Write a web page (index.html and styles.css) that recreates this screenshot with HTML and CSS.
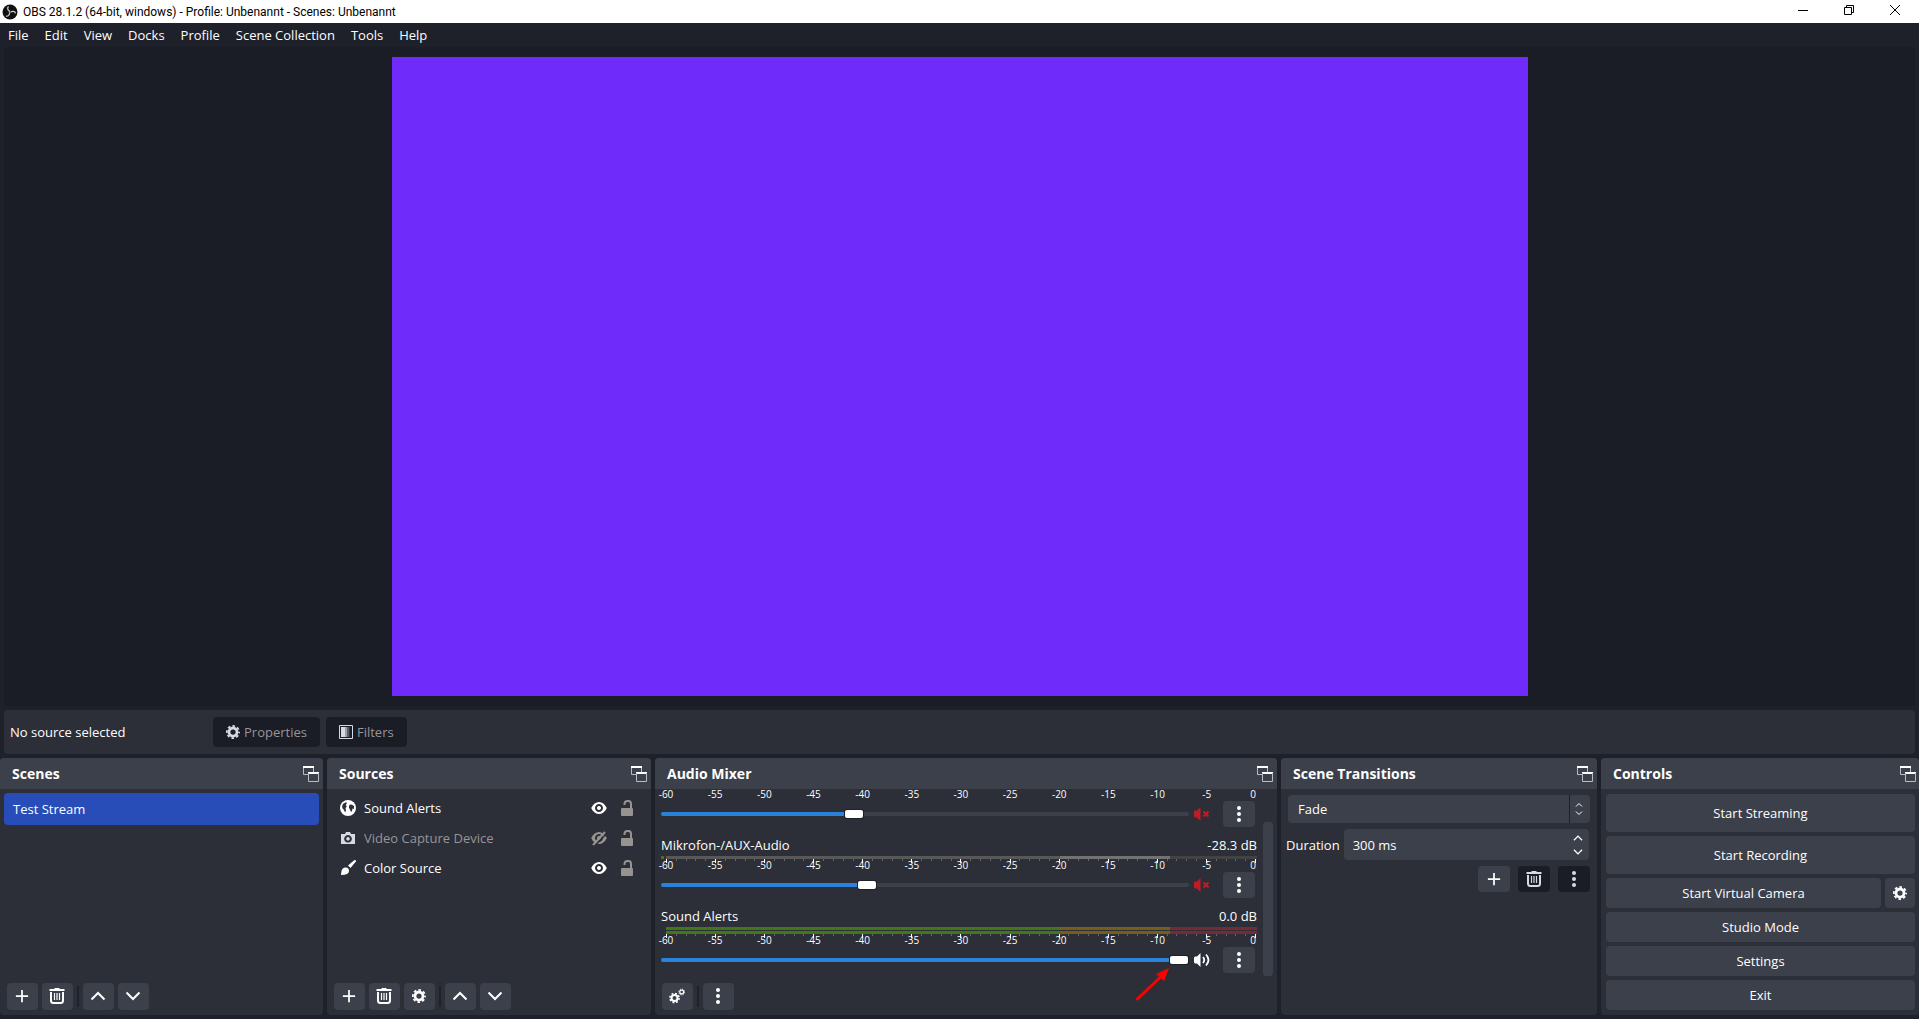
FILE: index.html
```html
<!DOCTYPE html>
<html lang="en">
<head>
<meta charset="utf-8">
<title>OBS 28.1.2 (64-bit, windows) - Profile: Unbenannt - Scenes: Unbenannt</title>
<link rel="stylesheet" href="styles.css">
</head>
<body>
<svg class="sprite" aria-hidden="true">
  <symbol id="popout" viewBox="0 0 16 16">
    <path d="M5.500 8.500h-5v-8h10v6" fill="none" stroke="#b9bcc2"/>
    <path d="M0 0h11v2H0zM5 6h11v2H5z" fill="#fff"/>
    <path d="M5.500 7v8.500h10V7" fill="none" stroke="#b9bcc2"/>
  </symbol>
  <symbol id="plus" viewBox="0 0 16 16"><path d="M8 1v14M1 8h14" stroke="currentColor" stroke-width="2"/></symbol>
  <symbol id="trash" viewBox="0 0 16 16">
    <path d="M.5 2h15M5.500 1h5" stroke="currentColor" stroke-width="1.800"/>
    <path d="M2 4v8.500q0 2.500 2.500 2.500h7q2.500 0 2.500-2.500V4" fill="none" stroke="currentColor" stroke-width="2"/>
    <path d="M5.500 5v7M8 5v7M10.500 5v7" stroke="currentColor" stroke-width="1.200"/>
  </symbol>
  <symbol id="gear" viewBox="0 0 16 16">
    <circle cx="8" cy="8" r="4.600" fill="none" stroke="currentColor" stroke-width="3.200"/>
    <circle cx="8" cy="8" r="7" fill="none" stroke="currentColor" stroke-width="2" stroke-dasharray="3 2.500" stroke-dashoffset="1.500"/>
  </symbol>
  <symbol id="gears" viewBox="0 0 16 16">
    <circle cx="5.500" cy="10" r="3" fill="none" stroke="currentColor" stroke-width="2"/>
    <circle cx="5.500" cy="10" r="4.600" fill="none" stroke="currentColor" stroke-width="1.600" stroke-dasharray="1.900 1.713"/>
    <circle cx="12.700" cy="4" r="1.900" fill="none" stroke="currentColor" stroke-width="1.200"/>
    <circle cx="12.700" cy="4" r="2.900" fill="none" stroke="currentColor" stroke-width="1" stroke-dasharray="1.200 1.078"/>
  </symbol>
  <symbol id="up" viewBox="0 0 16 16"><path d="M1.500 11.500 8 5l6.500 6.500" fill="none" stroke="currentColor" stroke-width="2"/></symbol>
  <symbol id="down" viewBox="0 0 16 16"><path d="M1.500 4.500 8 11l6.500-6.500" fill="none" stroke="currentColor" stroke-width="2"/></symbol>
  <symbol id="dots" viewBox="0 0 16 16"><g fill="currentColor"><circle cx="8" cy="2" r="2"/><circle cx="8" cy="8" r="2"/><circle cx="8" cy="14" r="2"/></g></symbol>
  <symbol id="globe" viewBox="0 0 16 16">
    <circle cx="8" cy="8" r="8" fill="#fff"/>
    <path d="M3.500 3.500 6 2.200 7 3 5.800 5l1 1.500L5.500 8 6 10.500 5 12.500 4 10 2.300 8 2.200 5.500zM9 6l1-1.500 2 .3L14 6v3l-1.500-.5-.5 2.500-1 1-1-2.500L9 8z" fill="#2c2e38"/>
  </symbol>
  <symbol id="camera" viewBox="0 0 16 16">
    <path fill="currentColor" fill-rule="evenodd" d="M1 4h4l1-2h4l1 2h4v10H1zM8 5a3.800 3.800 0 1 0 .01 0zM8 7a1.800 1.800 0 1 1-.01 0z"/>
  </symbol>
  <symbol id="brush" viewBox="0 0 16 16">
    <path fill="currentColor" d="M15.700.3q.6.700 0 1.500L10.500 8 8 5.500 14.200.3q.8-.6 1.500 0zM5 7.500Q9 7 9 11q0 4-8 4 0-1 .5-4Q2 8 5 7.500z"/>
  </symbol>
  <symbol id="eye" viewBox="0 0 16 16">
    <path d="M.2 8C2 4 5 2 8 2s6 2 7.800 6c-1.800 4-4.800 6-7.800 6S2 12 .2 8zM8 4a4 4 0 1 0 .01 0zM8 6a2 2 0 1 1-.01 0z" fill="currentColor" fill-rule="evenodd"/>
  </symbol>
  <symbol id="eye-off" viewBox="0 0 16 16">
    <path d="M.2 8C2 4 5 2 8 2s6 2 7.800 6c-1.800 4-4.800 6-7.800 6S2 12 .2 8zM8 4a4 4 0 1 0 .01 0zM8 6a2 2 0 1 1-.01 0z" fill="currentColor" fill-rule="evenodd"/>
    <path d="M3.500 16 16 3" stroke="#2c2e38" stroke-width="1.600"/>
    <path d="M2 15 14 2" stroke="currentColor" stroke-width="2"/>
  </symbol>
  <symbol id="lock" viewBox="0 0 16 16">
    <path d="M5.500 5V4q0-3 3-3h1q2.500 0 2.500 3v5" fill="none" stroke="currentColor" stroke-width="2"/>
    <path d="M3 8h10q1 0 1 1v6q0 1-1 1H3q-1 0-1-1V9q0-1 1-1z" fill="currentColor"/>
  </symbol>
  <symbol id="muted" viewBox="0 0 16 16">
    <path d="M0 5.500 1 4.500h2L6.500 1v14L3 11.500H1L0 10.500z" fill="currentColor"/>
    <path d="m9.500 5.500 5 5m0-5-5 5" stroke="currentColor" stroke-width="2.200"/>
  </symbol>
  <symbol id="speaker" viewBox="0 0 16 16">
    <path d="M0 5.500 1 4.500h2L6.500 1v14L3 11.500H1L0 10.500z" fill="currentColor"/>
    <path d="M9 5q2.500 3 0 6M12 2.500q5 5.500 0 11" fill="none" stroke="currentColor" stroke-width="1.800"/>
  </symbol>
  <symbol id="filter" viewBox="0 0 14 14">
    <path d="M.5.5h13v13H.5z" fill="none" stroke="#d7dae4"/>
    <path d="M2 2h4v10H2z" fill="#d7dae4"/><path d="M6 2h2v10H6z" fill="#9ea1ab"/><path d="M8 2h2v10H8z" fill="#5c5f6b"/><path d="M10 2h1v10h-1z" fill="#343743"/>
  </symbol>
</svg>

<header class="titlebar">
  <svg class="logo" viewBox="0 0 16 16" aria-hidden="true">
    <circle cx="8" cy="8" r="7.500" fill="#111"/>
    <g fill="none" stroke="#c9c9c9" stroke-width="1.300"><path d="M8 7.500C5.500 6.500 5 4 6.500 2.500"/><path d="M8 7.500C5.500 6.500 5 4 6.500 2.500" transform="rotate(120 8 8)"/><path d="M8 7.500C5.500 6.500 5 4 6.500 2.500" transform="rotate(240 8 8)"/></g>
  </svg>
  <h1 class="window-title">OBS 28.1.2 (64-bit, windows) - Profile: Unbenannt - Scenes: Unbenannt</h1>
  <div class="window-buttons">
    <button class="window-button" aria-label="Minimize"><svg viewBox="0 0 10 10"><path d="M0 5.500h10"/></svg></button>
    <button class="window-button" aria-label="Restore"><svg viewBox="0 0 10 10"><path d="M.5 2.500h7v7h-7zM2.500 2.500v-2h7v7h-2"/></svg></button>
    <button class="window-button" aria-label="Close"><svg viewBox="0 0 10 10"><path d="m0 0 10 10M10 0 0 10"/></svg></button>
  </div>
</header>

<nav class="menubar" aria-label="Main menu">
  <button class="menu">File</button><button class="menu">Edit</button><button class="menu">View</button><button class="menu">Docks</button><button class="menu">Profile</button><button class="menu">Scene Collection</button><button class="menu">Tools</button><button class="menu">Help</button>
</nav>

<main class="workspace">
  <section class="preview" aria-label="Preview"><div class="canvas"></div></section>

  <section class="context-bar" aria-label="Source toolbar">
    <span class="context-label">No source selected</span>
    <button class="context-button" disabled><svg class="icon-small"><use href="#gear"/></svg>Properties</button>
    <button class="context-button" disabled><svg class="icon-small"><use href="#filter"/></svg>Filters</button>
  </section>

  <div class="docks">
    <section class="dock">
      <header class="dock-header"><h2>Scenes</h2><button class="bare" aria-label="Float Scenes"><svg class="icon"><use href="#popout"/></svg></button></header>
      <ul class="scene-list"><li class="scene selected">Test Stream</li></ul>
      <div class="toolbar">
        <button class="tool" aria-label="Add scene"><svg class="icon-small"><use href="#plus"/></svg></button>
        <button class="tool" aria-label="Remove scene"><svg class="icon"><use href="#trash"/></svg></button>
        <span class="separator"></span>
        <button class="tool" aria-label="Move up"><svg class="icon"><use href="#up"/></svg></button>
        <button class="tool" aria-label="Move down"><svg class="icon"><use href="#down"/></svg></button>
      </div>
    </section>

    <section class="dock">
      <header class="dock-header"><h2>Sources</h2><button class="bare" aria-label="Float Sources"><svg class="icon"><use href="#popout"/></svg></button></header>
      <ul class="source-list">
        <li class="source"><svg class="icon"><use href="#globe"/></svg><span class="source-name">Sound Alerts</span><button class="bare" aria-label="Hide"><svg class="icon"><use href="#eye"/></svg></button><button class="bare dim" aria-label="Lock"><svg class="icon"><use href="#lock"/></svg></button></li>
        <li class="source hidden-source"><svg class="icon"><use href="#camera"/></svg><span class="source-name">Video Capture Device</span><button class="bare dim" aria-label="Show"><svg class="icon"><use href="#eye-off"/></svg></button><button class="bare dim" aria-label="Lock"><svg class="icon"><use href="#lock"/></svg></button></li>
        <li class="source"><svg class="icon"><use href="#brush"/></svg><span class="source-name">Color Source</span><button class="bare" aria-label="Hide"><svg class="icon"><use href="#eye"/></svg></button><button class="bare dim" aria-label="Lock"><svg class="icon"><use href="#lock"/></svg></button></li>
      </ul>
      <div class="toolbar">
        <button class="tool" aria-label="Add source"><svg class="icon-small"><use href="#plus"/></svg></button>
        <button class="tool" aria-label="Remove source"><svg class="icon"><use href="#trash"/></svg></button>
        <button class="tool" aria-label="Source properties"><svg class="icon-small"><use href="#gear"/></svg></button>
        <span class="separator"></span>
        <button class="tool" aria-label="Move up"><svg class="icon"><use href="#up"/></svg></button>
        <button class="tool" aria-label="Move down"><svg class="icon"><use href="#down"/></svg></button>
      </div>
    </section>

    <section class="dock">
      <header class="dock-header"><h2>Audio Mixer</h2><button class="bare" aria-label="Float Audio Mixer"><svg class="icon"><use href="#popout"/></svg></button></header>
      <div class="mixer">
        <div class="channels">
          <div class="channel">
            <div class="scale"><span>-60</span><span>-55</span><span>-50</span><span>-45</span><span>-40</span><span>-35</span><span>-30</span><span>-25</span><span>-20</span><span>-15</span><span>-10</span><span>-5</span><span>0</span></div>
            <div class="channel-controls">
              <input class="volume" type="range" min="0" max="1000" value="361" style="--level: 36%" aria-label="Desktop volume">
              <button class="bare mute" aria-label="Unmute"><svg class="icon"><use href="#muted"/></svg></button>
              <button class="channel-menu" aria-label="Channel options"><svg class="icon"><use href="#dots"/></svg></button>
            </div>
          </div>
          <div class="channel">
            <div class="channel-head"><label for="mic">Mikrofon-/AUX-Audio</label><output for="mic">-28.3 dB</output></div>
            <div class="meters muted"><div class="meter"></div></div>
            <div class="scale ticks"><span>-60</span><span>-55</span><span>-50</span><span>-45</span><span>-40</span><span>-35</span><span>-30</span><span>-25</span><span>-20</span><span>-15</span><span>-10</span><span>-5</span><span>0</span></div>
            <div class="channel-controls">
              <input class="volume" id="mic" type="range" min="0" max="1000" value="386" style="--level: 39%">
              <button class="bare mute" aria-label="Unmute"><svg class="icon"><use href="#muted"/></svg></button>
              <button class="channel-menu" aria-label="Channel options"><svg class="icon"><use href="#dots"/></svg></button>
            </div>
          </div>
          <div class="channel">
            <div class="channel-head"><label for="alerts">Sound Alerts</label><output for="alerts">0.0 dB</output></div>
            <div class="meters"><div class="meter"></div><div class="meter"></div></div>
            <div class="scale ticks"><span>-60</span><span>-55</span><span>-50</span><span>-45</span><span>-40</span><span>-35</span><span>-30</span><span>-25</span><span>-20</span><span>-15</span><span>-10</span><span>-5</span><span>0</span></div>
            <div class="channel-controls">
              <input class="volume" id="alerts" type="range" min="0" max="1000" value="998" style="--level: 98%">
              <button class="bare" aria-label="Mute"><svg class="icon"><use href="#speaker"/></svg></button>
              <button class="channel-menu" aria-label="Channel options"><svg class="icon"><use href="#dots"/></svg></button>
              <svg class="pointer" viewBox="0 0 34 34" aria-hidden="true"><path d="M1.500 32 24 10.500" stroke="#f00" stroke-width="3" stroke-linecap="round"/><path d="M33 1 28 14 20 7z" fill="#f00"/></svg>
            </div>
          </div>
        </div>
        <div class="scrollbar"></div>
      </div>
      <div class="toolbar">
        <button class="tool" aria-label="Advanced audio properties"><svg class="icon"><use href="#gears"/></svg></button>
        <span class="separator"></span>
        <button class="tool" aria-label="Mixer menu"><svg class="icon"><use href="#dots"/></svg></button>
      </div>
    </section>

    <section class="dock">
      <header class="dock-header"><h2>Scene Transitions</h2><button class="bare" aria-label="Float Scene Transitions"><svg class="icon"><use href="#popout"/></svg></button></header>
      <div class="transitions">
        <div class="combo">
          <select class="combo-select" aria-label="Transition"><option>Fade</option></select>
          <svg class="combo-arrows" viewBox="0 0 8 14" aria-hidden="true"><path d="M1 4.500 4 1.500l3 3M1 9.500l3 3 3-3"/></svg>
        </div>
        <div class="duration">
          <label for="duration">Duration</label>
          <div class="spin">
            <input class="spin-input" id="duration" type="text" value="300 ms">
            <div class="spin-buttons">
              <button class="bare" aria-label="Increase"><svg class="icon-step"><use href="#up"/></svg></button>
              <button class="bare" aria-label="Decrease"><svg class="icon-step"><use href="#down"/></svg></button>
            </div>
          </div>
        </div>
        <div class="transition-actions">
          <button class="channel-menu" aria-label="Add transition"><svg class="icon-small"><use href="#plus"/></svg></button>
          <button class="channel-menu" aria-label="Remove transition" disabled><svg class="icon"><use href="#trash"/></svg></button>
          <button class="channel-menu" aria-label="Transition options" disabled><svg class="icon"><use href="#dots"/></svg></button>
        </div>
      </div>
    </section>

    <section class="dock">
      <header class="dock-header"><h2>Controls</h2><button class="bare" aria-label="Float Controls"><svg class="icon"><use href="#popout"/></svg></button></header>
      <div class="controls">
        <button class="control tall">Start Streaming</button>
        <button class="control tall">Start Recording</button>
        <div class="control-row">
          <button class="control">Start Virtual Camera</button>
          <button class="control square" aria-label="Virtual camera settings"><svg class="icon-small"><use href="#gear"/></svg></button>
        </div>
        <button class="control">Studio Mode</button>
        <button class="control">Settings</button>
        <button class="control">Exit</button>
      </div>
    </section>
  </div>
</main>
</body>
</html>
```
FILE: styles.css
```css
:root {
  --window: #1f212a;
  --base: #1a1c26;
  --panel: #2c2e38;
  --button: #3c404b;
  --text: #fefefe;
  --dim: #969696;
}

* { box-sizing: border-box; }

body {
  margin: 0;
  height: 100vh;
  display: flex;
  flex-direction: column;
  overflow: hidden;
  background: var(--window);
  color: var(--text);
  font: 13px/16px "Open Sans", "Noto Sans", sans-serif;
}

button, input, select { font: inherit; color: inherit; border: 0; padding: 0; margin: 0; }
button { display: flex; align-items: center; justify-content: center; background: var(--button); border-radius: 4px; }
h1, h2, ul { margin: 0; padding: 0; }
svg { display: block; flex: none; }

.sprite { position: absolute; width: 0; height: 0; }
.icon { width: 16px; height: 16px; }
.icon-small { width: 14px; height: 14px; }
.icon-step { width: 10px; height: 10px; }
.bare { background: none; border-radius: 0; }

.titlebar { display: flex; align-items: center; height: 23px; padding-left: 2px; background: #fff; color: #000; }
.logo { width: 16px; height: 16px; }
.window-title { flex: 1; margin-left: 5px; font: 12px/16px Roboto, sans-serif; }
.window-buttons { display: flex; align-items: flex-start; height: 100%; margin-right: 1px; }
.window-button { width: 46px; height: 20px; background: none; color: #000; }
.window-button svg { width: 10px; height: 10px; fill: none; stroke: #000; }

.menubar { display: flex; gap: 16px; height: 24px; padding: 0 8px; }
.menu { background: none; }

.workspace { flex: 1; min-height: 0; display: flex; flex-direction: column; gap: 4px; padding-bottom: 4px; }
.preview { flex: 1; min-height: 0; display: flex; justify-content: center; margin: 0 4px; padding: 10px; background: var(--base); }
.canvas { height: 100%; aspect-ratio: 16 / 9; background: #6f2bf9; }

.context-bar { display: flex; align-items: center; gap: 6px; height: 44px; margin: 0 4px; padding: 0 6px; background: var(--panel); border-radius: 4px; }
.context-label { width: 197px; }
.context-button { height: 30px; gap: 4px; padding: 0 13px; background: var(--base); color: var(--dim); }
.context-button svg { color: #d7dae4; }

.docks { display: grid; grid-template-columns: 323fr 324fr 622fr 316fr 318fr; gap: 4px; }
.dock { display: flex; flex-direction: column; min-width: 0; background: var(--panel); border-radius: 4px; overflow: hidden; }
.dock-header { display: flex; align-items: center; justify-content: space-between; height: 31px; padding: 0 4px 0 12px; background: var(--button); }
.dock:last-child .dock-header { padding-right: 3px; }
.dock-header h2 { font-size: 14px; line-height: 18px; font-weight: 700; }

.scene-list { flex: 1; padding: 4px; list-style: none; }
.scene { height: 32px; padding: 8px 9px; border-radius: 4px; }
.selected { background: #284cb8; }

.source-list { flex: 1; padding: 4px 16px 4px 13px; list-style: none; }
.source { display: flex; align-items: center; height: 30px; }
.source-name { flex: 1; margin-left: 8px; }
.source .bare + .bare { margin-left: 12px; }
.hidden-source { color: var(--dim); }
.hidden-source > .icon { color: #d7dae4; }
.dim { color: #969390; }

.toolbar { display: flex; align-items: center; gap: 4px; padding: 0 7px 5px; }
.tool { width: 31px; height: 27px; padding: 0 1px 1px 0; }
.separator { width: 2px; height: 21px; background: var(--window); }

.mixer { flex: 1; display: flex; gap: 6px; padding: 0 4px 0 6px; }
.channels { flex: 1; min-width: 0; display: flex; flex-direction: column; gap: 10px; margin-top: -1px; }
.channel-head { display: flex; justify-content: space-between; height: 19px; }
.meters { display: flex; flex-direction: column; gap: 1px; padding-left: 5px; }
.meter { height: 3px; background: linear-gradient(to right, #437519 66.6%, #755d1b 66.6% 85.2%, #752a37 85.2%); }
.muted { background: linear-gradient(#437519, #437519) left / 3px 100% no-repeat; }
.muted .meter { background: linear-gradient(to right, #585858 66.6%, #727272 66.6% 85.2%, #424242 85.2%); }

.scale { display: flex; justify-content: space-between; height: 13px; padding: 0 1px 0 5px; font-size: 10px; line-height: 13px; }
.scale span { display: flex; justify-content: center; width: 0; }
.scale span:last-child { justify-content: flex-end; }
.ticks {
  background:
    repeating-linear-gradient(to right, #fff 0 1px, transparent 1px calc((100% - 1px) / 12)) content-box 0 0 / 100% 4px no-repeat,
    repeating-linear-gradient(to right, #666 0 1px, transparent 1px calc((100% - 1px) / 60)) content-box 0 0 / 100% 2px no-repeat;
}

.channel-controls { position: relative; display: flex; align-items: center; height: 26px; padding-right: 2px; }
.volume { -webkit-appearance: none; appearance: none; flex: 1; min-width: 0; height: 8px; margin-right: 5px; background: none; }
.volume::-webkit-slider-runnable-track { height: 4px; border-radius: 2px; background: linear-gradient(to right, #2a82da var(--level), var(--button) var(--level)); }
.volume::-webkit-slider-thumb { -webkit-appearance: none; width: 18px; height: 8px; margin-top: -2px; border-radius: 2px; background: #fff; box-shadow: 0 0 0 1px var(--window); }
.mute { color: #c01c26; }
.channel-menu { width: 32px; height: 26px; }
.channel-controls .channel-menu { margin-left: 13px; }
.channel-menu:disabled { background: var(--base); color: #d7dae4; }
.pointer { position: absolute; right: 87px; top: 20px; width: 34px; height: 34px; }
.scrollbar { width: 10px; height: 154px; margin-top: 33px; background: var(--button); border-radius: 3px; }

.transitions { display: flex; flex-direction: column; padding: 6px 7px 0 5px; gap: 6px; }
.combo { display: flex; align-items: center; height: 28px; margin-left: 2px; padding-right: 7px; background: var(--button); border-radius: 4px; }
.combo-select { -webkit-appearance: none; appearance: none; flex: 1; height: 28px; margin-right: 5px; padding: 0 10px; background: none; border-right: 1px solid var(--window); }
.combo-arrows { width: 8px; height: 14px; fill: none; stroke: #fefefe; }
.duration { display: flex; align-items: center; gap: 4px; }
.spin { flex: 1; min-width: 0; display: flex; align-items: center; height: 31px; margin-right: 1px; padding: 0 6px 0 9px; background: var(--button); border-radius: 4px; }
.spin-input { flex: 1; min-width: 0; background: none; }
.spin-buttons { display: flex; flex-direction: column; gap: 4px; }
.transition-actions { display: flex; justify-content: flex-end; gap: 8px; }

.controls { display: flex; flex-direction: column; gap: 4px; padding: 5px 4px 5px 5px; }
.control { height: 30px; }
.tall { height: 38px; }
.control-row { display: flex; gap: 4px; }
.control-row .control { flex: 1; }
.control-row .square { flex: none; width: 30px; }
```
